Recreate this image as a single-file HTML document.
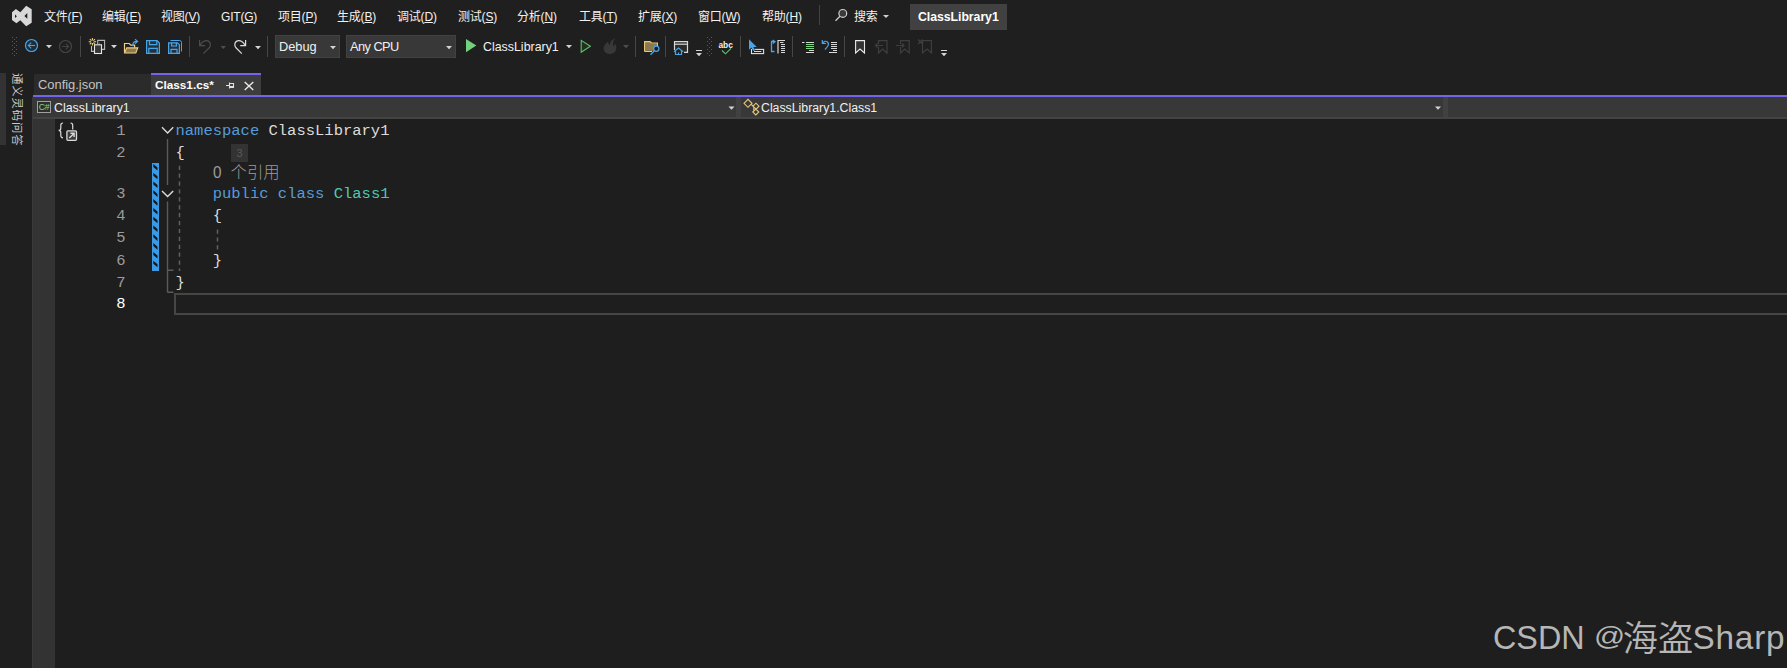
<!DOCTYPE html>
<html lang="zh-CN">
<head>
<meta charset="utf-8">
<title>ClassLibrary1</title>
<style>
html,body{margin:0;padding:0;}
body{width:1787px;height:668px;overflow:hidden;background:#1f1f1f;position:relative;
  font-family:"Liberation Sans","Noto Sans CJK SC",sans-serif;font-size:12px;color:#f0f0f0;}
.abs{position:absolute;}
.menu{position:absolute;top:1px;letter-spacing:-0.2px;height:32px;line-height:32px;white-space:nowrap;color:#f2f2f2;font-size:12px;}
.menu u{text-decoration:underline;text-underline-offset:0.5px;text-decoration-thickness:1px;}
.tb{position:absolute;}
.combo{position:absolute;top:35px;height:21px;background:#383838;border:1px solid #424242;box-sizing:content-box;line-height:21.6px;font-size:12.8px;color:#f0f0f0;}
.arrow{position:absolute;width:0;height:0;border-left:3px solid transparent;border-right:3px solid transparent;border-top:3px solid #d0d0d0;}
.code{position:absolute;font-family:"Liberation Mono","DejaVu Sans Mono",monospace;font-size:15.5px;white-space:pre;line-height:22px;height:22px;color:#dcdcdc;}
.ln{position:absolute;font-family:"Liberation Mono","DejaVu Sans Mono",monospace;font-size:15.5px;width:30px;text-align:right;left:95.5px;line-height:22px;height:22px;color:#9a9a9a;}
.code,.ln{margin-top:1px}
.kw{color:#569cd6;}
.ty{color:#4ec9b0;}
</style>
</head>
<body>
<!-- MENU BAR -->
<div id="menubar">
<svg class="abs" style="left:0;top:0" width="40" height="32" viewBox="0 0 40 32"><path fill="#d8d8d8" fill-rule="evenodd" d="M26.2 5.8 L31.7 9.3 V22.8 L26.2 26.2 L20.3 20.3 L16.4 23.3 L12 19.9 V12.3 L15.9 9 L20.3 12.2 Z M27.3 13 L24.4 16 L27.3 18.8 Z M15 14.4 L16.9 16.2 L15 18.1 Z"/></svg>
<div class="menu" style="left:44px">文件(<u>F</u>)</div>
<div class="menu" style="left:102px">编辑(<u>E</u>)</div>
<div class="menu" style="left:161px">视图(<u>V</u>)</div>
<div class="menu" style="left:221px">GIT(<u>G</u>)</div>
<div class="menu" style="left:278px">项目(<u>P</u>)</div>
<div class="menu" style="left:337px">生成(<u>B</u>)</div>
<div class="menu" style="left:397px">调试(<u>D</u>)</div>
<div class="menu" style="left:458px">测试(<u>S</u>)</div>
<div class="menu" style="left:517px">分析(<u>N</u>)</div>
<div class="menu" style="left:579px">工具(<u>T</u>)</div>
<div class="menu" style="left:638px">扩展(<u>X</u>)</div>
<div class="menu" style="left:698px">窗口(<u>W</u>)</div>
<div class="menu" style="left:762px">帮助(<u>H</u>)</div>
<div class="abs" style="left:819px;top:5px;width:1px;height:20px;background:#424242"></div>
<svg class="abs" style="left:834px;top:8px" width="15" height="15" viewBox="0 0 15 15"><circle cx="8.8" cy="5.4" r="3.9" fill="#3a3a3a" stroke="#d0d0d0" stroke-width="1.2"/><path d="M6 8.3 L1.5 12.8" stroke="#d0d0d0" stroke-width="1.25" fill="none"/></svg>
<div class="menu" style="left:854px;top:0.6px">搜索</div>
<div class="arrow" style="left:883px;top:15px"></div>
<div class="abs" style="left:910px;top:4px;width:97px;height:26px;background:#414141"></div>
<div class="menu" style="left:918px;top:1px;font-weight:bold;color:#ffffff;font-size:12.3px;letter-spacing:-0.05px">ClassLibrary1</div>
</div>

<!-- TOOLBAR -->
<div id="toolbar">
<div class="combo" style="left:275px;width:63px"><span style="position:absolute;left:3px">Debug</span></div>
<div class="combo" style="left:346px;width:108px"><span style="position:absolute;left:3px;letter-spacing:-0.55px">Any CPU</span></div>
<div class="abs" style="left:483px;top:36px;height:23px;line-height:23px;font-size:12.4px;color:#f0f0f0">ClassLibrary1</div>
<svg class="abs" style="left:0;top:0" width="1787" height="64" viewBox="0 0 1787 64">
<defs>
<pattern id="grip" x="12" y="37" width="4" height="4" patternUnits="userSpaceOnUse"><rect x="0" y="0" width="1" height="1" fill="#5a5a5a"/><rect x="2" y="2" width="1" height="1" fill="#5a5a5a"/></pattern>
</defs>
<!-- grips -->
<rect x="12" y="37" width="5" height="19" fill="url(#grip)"/>
<g transform="translate(695 0)"><rect x="12" y="37" width="5" height="19" fill="url(#grip)"/></g>
<!-- separators -->
<g fill="#464646">
<rect x="80" y="36" width="1" height="21"/><rect x="189" y="36" width="1" height="21"/><rect x="267" y="36" width="1" height="21"/>
<rect x="635" y="36" width="1" height="21"/><rect x="665" y="36" width="1" height="21"/><rect x="740" y="36" width="1" height="21"/>
<rect x="792" y="36" width="1" height="21"/><rect x="844" y="36" width="1" height="21"/>
</g>
<!-- back -->
<g fill="none" stroke="#47a5ea" stroke-width="1.2"><circle cx="31.5" cy="45.5" r="6" fill="#212d36"/><path d="M35 45.5 H28.4 M31.2 42.6 L28.3 45.5 L31.2 48.4" stroke-width="1.05"/></g>
<path d="M46 45 h6 l-3 3.3z" fill="#d4d4d4"/>
<!-- forward (disabled) -->
<g fill="none" stroke="#454545" stroke-width="1.2"><circle cx="65.5" cy="46.5" r="6"/><path d="M62 46.5 H68.6 M65.8 43.6 L68.7 46.5 L65.8 49.4" stroke-width="1.05"/></g>
<!-- new project -->
<g fill="none" stroke-width="1.1"><path d="M97.7 44 V40.4 H104.6 V49.4 H102" stroke="#b4b4b4"/><path d="M99.5 42.5 V46.5" stroke="#555"/><path d="M91.5 46 V51.4 H94" stroke="#bcbcbc"/><rect x="94.5" y="44.8" width="7" height="8.7" fill="#363636" stroke="#e6e6e6"/></g>
<g stroke="#f0d680" stroke-width="1.05" fill="none"><path d="M92.4 38 V40.4 M92.4 43 V45.4 M88.7 41.7 H91.1 M93.7 41.7 H96.1 M89.8 39.1 L91.4 40.7 M93.4 42.7 L95 44.3 M95 39.1 L93.4 40.7 M91.4 42.7 L89.8 44.3"/></g>
<path d="M111 45 h6 l-3 3.3z" fill="#d4d4d4"/>
<!-- open folder -->
<path d="M124.5 52.5 V43.5 H129.3 L130.8 45.1 H134.6 V47.5" fill="none" stroke="#f0cf85" stroke-width="1.2"/>
<path d="M124.6 53 L126.7 47.9 H137.8 L135.8 53 Z" fill="#8c7a4d" stroke="#f0cf85" stroke-width="1.1"/>
<path d="M132.9 46.3 V44.6 Q132.9 41.4 136.8 41.4 M135 39.2 L137.6 41.4 L135 43.6" fill="none" stroke="#47a5ea" stroke-width="1.2"/>
<!-- save -->
<g fill="none" stroke="#47a5ea" stroke-width="1.2"><path d="M146.6 40.6 H157 L159.4 43 V53.4 H146.6 Z" fill="#25323c"/><path d="M149.5 40.6 V44.6 H156.8 V40.6 M148.8 53.4 V48.3 H157.2 V53.4"/></g>
<!-- save all -->
<g fill="none" stroke="#47a5ea" stroke-width="1.2"><path d="M170.5 40.5 H179.5 Q181.5 40.5 181.5 42.5 V51.5" stroke-width="1"/><path d="M168.6 42.8 H177.5 L179.4 44.7 V53.4 H168.6 Z" fill="#25323c"/><path d="M171.6 42.8 V46 H176.4 V42.8 M171 53.4 V49.3 H177 V53.4"/></g>
<!-- undo (disabled) -->
<path d="M199.6 40 V45.6 H205 M200 45.3 Q203 40.4 206.8 40.6 Q210.4 41.2 210.4 44.8 Q210.4 46.6 209 48 L203.4 53.6" fill="none" stroke="#4c4c4c" stroke-width="1.2"/>
<path d="M220.5 46 h5.5 l-2.75 3z" fill="#4e4e4e"/>
<!-- redo -->
<path d="M245.6 40 V45.6 H240.2 M245.2 45.3 Q242.2 40.4 238.4 40.6 Q234.8 41.2 234.8 44.8 Q234.8 46.6 236.2 48 L241.8 53.6" fill="none" stroke="#dcdcdc" stroke-width="1.2"/>
<path d="M255 46 h6 l-3 3.3z" fill="#d4d4d4"/>
<!-- combo arrows -->
<path d="M330 46 h6 l-3 3.3z" fill="#d4d4d4"/>
<path d="M446 46 h6 l-3 3.3z" fill="#d4d4d4"/>
<!-- play -->
<path d="M466 39 L476.3 45.6 L466 52.2 Z" fill="#73d17b"/>
<path d="M566 45 h6 l-3 3.3z" fill="#d4d4d4"/>
<path d="M581.2 40.4 L590.4 46.3 L581.2 52.2 Z" fill="#22301f" stroke="#5fc56c" stroke-width="1.05" stroke-linejoin="miter"/>
<!-- hot reload (disabled) -->
<path d="M615.5 38.3 Q610 40 609.8 45 Q608 44 608 41.8 Q602.5 46 603.8 50 Q605.5 54 610 53.9 Q615.3 53.6 616.3 49 Q617 45.8 615 43.5 Q614.8 45.5 613.3 46.2 Q612 41.5 615.5 38.3 Z" fill="#383838"/>
<path d="M623 45 h6 l-3 3.3z" fill="#4e4e4e"/>
<!-- folder search -->
<path d="M644.6 51.4 V41.6 H650 L651.5 43 H657.4 V46" fill="#8c7a4d" stroke="#e8c77a" stroke-width="1.2"/>
<path d="M644.6 51.4 H652" stroke="#e8c77a" stroke-width="1.2"/><rect x="645.2" y="43.6" width="11.6" height="7.2" fill="#8c7a4d"/>
<circle cx="656.3" cy="48.8" r="2.6" fill="#1f1f1f" stroke="#47a5ea" stroke-width="1.2"/><path d="M654.4 50.8 L650.5 54.7" stroke="#47a5ea" stroke-width="1.3"/>
<!-- window home -->
<path d="M674.5 50 V41.6 H687.5 V52.4 H684" fill="#2b2b2b" stroke="#d8d8d8" stroke-width="1.2"/><path d="M674.5 44.2 H687.5" stroke="#d8d8d8" stroke-width="1.2"/>
<path d="M674 51.8 L678.5 48 L683 51.8 M675.5 51 V54.5 H681.5 V51 M678.5 54.5 V52.5" fill="#1f1f1f" stroke="#47a5ea" stroke-width="1.2"/>
<path d="M696 50 h6 v1 h-6z M696 53 h6 l-3 3.2z" fill="#d4d4d4"/>
<!-- check -->
<path d="M722 50.5 L725.5 53.8 L731 48.3" fill="none" stroke="#5fc56c" stroke-width="1.1"/>
<!-- cursor select -->
<rect x="751.5" y="49.4" width="12.1" height="4.2" fill="none" stroke="#e0e0e0" stroke-width="1.1"/><path d="M754 51.5 H761.3" stroke="#d8d8d8" stroke-width="1"/>
<path d="M749 39.3 V49.8 L751.6 47.6 L753.2 51 L755 50.2 L753.4 46.9 H756.8 Z" fill="#47a5ea" stroke="#1f1f1f" stroke-width="0.8" paint-order="stroke"/>
<!-- doc icon -->
<path d="M774.5 41.5 H771.5 V51.5 H774.5 M772.8 40 L775 41.7 L772.8 43.4" fill="none" stroke="#47a5ea" stroke-width="1.3"/>
<path d="M778 53.5 V40.5 H785" fill="none" stroke="#d8d8d8" stroke-width="1.2"/>
<g stroke="#d8d8d8" stroke-width="1"><path d="M780 42.5 H783.5 M781 44.5 H785 M781 46.5 H785 M781 48.5 H785 M781 50.5 H785 M781 52.5 H785"/></g>
<!-- indent -->
<g stroke-width="1"><path d="M802 42.5 H804.5 M806 42.5 H814" stroke="#d8d8d8"/><path d="M806 44.5 H814 M806 46.5 H814 M806 48.5 H814" stroke="#7ad77f"/><path d="M809 50.5 H814 M806 52.5 H814" stroke="#d8d8d8"/></g>
<!-- unindent -->
<path d="M822.3 40 V43.5 H826 M822.6 43.3 Q825 40 827.5 42 Q829.5 44 827.5 46.5 L825 49.5" fill="none" stroke="#47a5ea" stroke-width="1.2"/>
<g stroke="#d8d8d8" stroke-width="1"><path d="M831 42.5 H837 M831 44.5 H837 M831 46.5 H837 M831 48.5 H837 M833 50.5 H837 M829 52.5 H837"/></g>
<!-- bookmark -->
<path d="M855.6 53 V40.6 H864.5 V53 L860 49 Z" fill="#333" stroke="#e8e8e8" stroke-width="1.1"/>
<g fill="none" stroke="#3e3e3e" stroke-width="1.2">
<path d="M878.5 44 V40.6 H887 V53 L882.7 49 L878.5 53 V47 M883 45.5 H875.5 M877.5 43.5 L875.5 45.5 L877.5 47.5"/>
<path d="M900.5 44 V40.6 H909.2 V53 L904.8 49 L900.5 53 V47 M896 45.5 H904 M902 43.5 L904 45.5 L902 47.5"/>
<path d="M922.5 44 V40.6 H931.4 V53 L927 49 L922.5 53 V44 M918 39.5 L922.5 44 M922.5 39.5 L918 44"/>
</g>
<path d="M941 50 h6 v1 h-6z M941 53 h6 l-3 3.2z" fill="#d4d4d4"/>
</svg>
<div class="abs" style="left:718.4px;top:39.7px;font-size:8.4px;font-weight:bold;line-height:10px;color:#f0f0f0;letter-spacing:0px">abc</div>
</div>

<!-- LEFT STRIP -->
<div id="leftstrip">
<div class="abs" style="left:0;top:73px;width:6px;height:72px;background:#333333"></div>
<div class="abs" style="left:23.2px;top:73.3px;width:76px;height:13px;line-height:13px;font-size:11.4px;letter-spacing:0.85px;color:#c8c8c8;transform-origin:0 0;transform:rotate(90deg);white-space:nowrap">通义灵码问答</div>
</div>

<!-- TABS -->
<div id="tabs">
<div class="abs" style="left:34px;top:74px;width:117px;height:21px;background:#2b2b2b"></div>
<div class="abs" style="left:38px;top:73.8px;height:21px;line-height:21px;font-size:12.9px;color:#c4c4c4">Config.json</div>
<div class="abs" style="left:151px;top:73px;width:110px;height:22px;background:#3d3d3d"></div>
<div class="abs" style="left:151px;top:73px;width:110px;height:2px;background:#7463ec"></div>
<div class="abs" style="left:155px;top:74.2px;height:21px;line-height:21px;font-size:11.75px;font-weight:bold;color:#ffffff">Class1.cs*</div>
<svg class="abs" style="left:222px;top:78px" width="36" height="16" viewBox="222 78 36 16">
<g fill="none" stroke="#e0e0e0" stroke-width="1.1"><path d="M226 85.5 H229.5 M229.5 82.5 V88.5 M229.5 83.5 H233.5 V87.5 H229.5 M233.5 86.5 H230"/></g>
<path d="M244.7 82 L253.3 90 M253.3 82 L244.7 90" stroke="#e8e8e8" stroke-width="1.4" fill="none"/>
</svg>
<div class="abs" style="left:33px;top:95px;width:1754px;height:2px;background:#7463ec"></div>
</div>

<!-- NAV BAR -->
<div id="navbar">
<div class="abs" style="left:32px;top:97px;width:1px;height:571px;background:#3a3a3a"></div>
<div class="abs" style="left:33px;top:97px;width:1754px;height:21px;background:#383838"></div>
<div class="abs" style="left:33px;top:117px;width:1754px;height:2px;background:#434343"></div>
<div class="abs" style="left:736px;top:97px;width:5px;height:20px;background:#414141"></div>
<div class="abs" style="left:1443px;top:97px;width:5px;height:20px;background:#414141"></div>
<div class="abs" style="left:37px;top:101px;width:12px;height:10px;border:1px solid #a0a0a0;background:#2e2e2e"></div>
<div class="abs" style="left:38px;top:102px;width:12px;height:10px;line-height:10px;font-size:8.8px;color:#7fd88a;text-align:center;letter-spacing:-0.3px">C#</div>
<div class="abs" style="left:54px;top:98px;height:21px;line-height:21px;font-size:12.4px;color:#f0f0f0">ClassLibrary1</div>
<div class="abs" style="left:761px;top:98px;height:21px;line-height:21px;font-size:12.3px;color:#f0f0f0">ClassLibrary1.Class1</div>
<svg class="abs" style="left:720px;top:97px" width="740" height="21" viewBox="720 97 740 21">
<path d="M728.5 106.5 h6 l-3 3.3z" fill="#d4d4d4"/>
<path d="M1435 106.5 h6 l-3 3.3z" fill="#d4d4d4"/>
<g fill="none" stroke="#e8c77a" stroke-width="1.1"><path d="M744 103.3 L748 99.3 L752 103.3 L748 107.3 Z"/><path d="M751 104.6 L753.6 106 M753.8 107.5 V110.5"/><path d="M753 106.2 L756 103.2 L759 106.2 L756 109.2 Z M752.8 112 L755.8 109 L758.8 112 L755.8 115 Z"/></g>
</svg>
</div>

<!-- EDITOR -->
<div id="editor">
<div class="abs" style="left:33px;top:119px;width:22px;height:549px;background:#333333"></div>
<div class="abs" style="left:55px;top:119px;width:1732px;height:549px;background:#1e1e1e"></div>
<div class="abs" style="left:174px;top:293px;width:1620px;height:18px;border:2px solid #464646"></div>
<div class="ln" style="top:118.5px;color:#9b9b9b">1</div>
<div class="code" style="left:175.5px;top:118.5px"><span class="kw">namespace</span> ClassLibrary1</div>
<div class="ln" style="top:141px;color:#9b9b9b">2</div>
<div class="code" style="left:175.5px;top:141px">{</div>
<div class="ln" style="top:182px;color:#9b9b9b">3</div>
<div class="code" style="left:175.5px;top:182px">    <span class="kw">public</span> <span class="kw">class</span> <span class="ty">Class1</span></div>
<div class="ln" style="top:204px;color:#9b9b9b">4</div>
<div class="code" style="left:175.5px;top:204px">    {</div>
<div class="ln" style="top:226.3px;color:#9b9b9b">5</div>
<div class="ln" style="top:248.60000000000002px;color:#9b9b9b">6</div>
<div class="code" style="left:175.5px;top:248.60000000000002px">    }</div>
<div class="ln" style="top:270.5px;color:#9b9b9b">7</div>
<div class="code" style="left:175.5px;top:270.5px">}</div>
<div class="ln" style="top:292.3px;color:#ffffff">8</div>
<div class="abs" style="left:231px;top:144px;width:17px;height:18px;background:#333333;color:#5a5a5a;font-size:11px;line-height:18px;text-align:center">3</div>
<div class="abs" style="left:212.6px;top:161.5px;height:22px;line-height:22px;font-size:17px;color:#9b9b9b;font-family:'Liberation Sans',sans-serif;transform-origin:0 50%;transform:scaleX(0.9)">0</div>
<div class="abs" style="left:230.6px;top:161px;font-weight:300;height:22px;line-height:22px;font-size:16.4px;color:#9b9b9b;white-space:pre;font-family:'Liberation Sans','Noto Sans CJK SC',sans-serif">个引用</div>
<svg class="abs" style="left:55px;top:119px" width="200" height="200" viewBox="55 119 200 200">
<rect x="152" y="163" width="7" height="108" fill="#3a9ae6"/><path d="M153.3 163.9 L157.5 167.5 L157.5 170.5 L153.3 166.9 Z M153.3 172.7 L157.5 176.3 L157.5 179.3 L153.3 175.7 Z M153.3 181.5 L157.5 185.1 L157.5 188.1 L153.3 184.5 Z M153.3 190.3 L157.5 193.9 L157.5 196.9 L153.3 193.3 Z M153.3 199.1 L157.5 202.7 L157.5 205.7 L153.3 202.1 Z M153.3 207.9 L157.5 211.5 L157.5 214.5 L153.3 210.9 Z M153.3 216.7 L157.5 220.3 L157.5 223.3 L153.3 219.7 Z M153.3 225.5 L157.5 229.1 L157.5 232.1 L153.3 228.5 Z M153.3 234.3 L157.5 237.9 L157.5 240.9 L153.3 237.3 Z M153.3 243.1 L157.5 246.7 L157.5 249.7 L153.3 246.1 Z M153.3 251.9 L157.5 255.5 L157.5 258.5 L153.3 254.9 Z M153.3 260.7 L157.5 264.3 L157.5 267.3 L153.3 263.7 Z" fill="#181818"/>
<g fill="none" stroke="#dcdcdc" stroke-width="1.4"><path d="M162 127.3 L167.6 132.9 L173.2 127.3"/><path d="M162 191 L167.6 196.6 L173.2 191"/></g>
<g fill="none" stroke="#5a5a5a" stroke-width="1.4"><path d="M167.5 139 V185 M167.5 201.5 V292.5 M167.5 270.3 H173.5 M167.5 292.3 H173.5"/>
<path d="M179.5 165.7 V271 M217.5 229.5 V249.5" stroke-dasharray="4.2 3.7" stroke="#606060" stroke-width="1.5"/></g>
<g fill="none" stroke="#dadada" stroke-width="1.2"><path d="M63 123 Q60.8 123 60.8 125.2 V128.3 Q60.8 130.4 58.6 130.4 Q60.8 130.4 60.8 132.5 V135.6 Q60.8 137.8 63 137.8"/><path d="M70.5 123 Q72.7 123 72.7 125.2 V129.5"/>
<rect x="66.9" y="130.9" width="9.6" height="9.4" rx="1" fill="#3c3c3c" stroke-width="1.3"/><path d="M69.3 138.1 L74 133.4 M70.4 133.3 H74.1 V137" stroke-width="1.4"/></g>
</svg>
</div>

<!-- WATERMARK -->
<div id="wm" style="color:#b6b6b6;white-space:nowrap">
<div class="abs" id="w1" style="left:1493.2px;top:614px;height:48px;line-height:48px;font-size:33px;transform-origin:0 50%;transform:scaleX(0.98)">CSDN</div>
<div class="abs" id="w2" style="left:1594px;top:612px;height:48px;line-height:48px;font-size:29px;transform-origin:0 50%;transform:scale(1.06,0.92)">@</div>
<div class="abs" id="w3" style="font-weight:350;left:1622.8px;top:615px;height:48px;line-height:48px;font-size:35.2px">海盗</div>
<div class="abs" id="w4" style="left:1692.5px;top:614px;height:48px;line-height:48px;font-size:33.3px;letter-spacing:0.8px">Sharp</div>
</div>
</body>
</html>
